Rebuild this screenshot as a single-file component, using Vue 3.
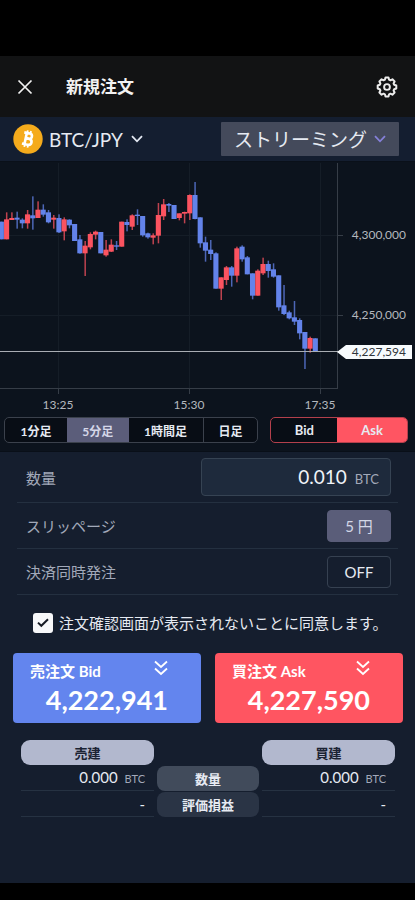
<script setup>
import { ref } from 'vue'

const UP = 'up'
const DOWN = 'down'

// [direction, body top, body bottom, wick high, wick low], three units per pixel
const series = [
  [DOWN, 185, 238, 185, 238], [UP, 178, 238, 157, 238], [UP, 174, 180, 157, 180],
  [DOWN, 173, 179, 155, 206], [DOWN, 179, 190, 175, 205], [UP, 163, 190, 150, 206],
  [DOWN, 166, 175, 109, 209], [UP, 149, 174, 124, 174], [DOWN, 149, 164, 133, 170],
  [DOWN, 157, 187, 150, 190], [UP, 173, 179, 165, 206], [DOWN, 174, 217, 163, 219],
  [UP, 178, 214, 172, 241], [DOWN, 179, 196, 178, 205], [DOWN, 192, 243, 192, 243],
  [DOWN, 238, 280, 225, 281], [UP, 257, 280, 243, 348], [UP, 222, 262, 217, 268],
  [UP, 215, 224, 212, 238], [DOWN, 216, 280, 216, 280], [UP, 269, 286, 240, 290],
  [UP, 254, 275, 238, 276], [DOWN, 256, 260, 243, 270], [UP, 185, 260, 185, 260],
  [DOWN, 186, 195, 178, 214], [UP, 166, 200, 163, 210], [DOWN, 164, 168, 148, 195],
  [DOWN, 168, 226, 168, 230], [DOWN, 220, 232, 218, 236], [UP, 226, 233, 220, 253],
  [UP, 165, 227, 129, 250], [UP, 133, 169, 117, 180], [DOWN, 132, 137, 129, 156],
  [DOWN, 135, 177, 135, 177], [UP, 160, 174, 160, 181], [UP, 156, 161, 155, 190],
  [UP, 105, 160, 103, 180], [DOWN, 105, 177, 66, 178], [DOWN, 172, 250, 172, 263],
  [DOWN, 247, 272, 230, 305], [DOWN, 269, 282, 240, 300], [DOWN, 280, 386, 277, 386],
  [UP, 352, 386, 352, 420], [UP, 322, 360, 318, 375], [DOWN, 322, 347, 318, 380],
  [UP, 265, 347, 260, 367], [DOWN, 260, 298, 256, 305], [DOWN, 292, 343, 288, 343],
  [DOWN, 340, 407, 340, 418], [UP, 332, 407, 328, 407], [UP, 312, 340, 293, 345],
  [DOWN, 312, 333, 302, 353], [DOWN, 328, 350, 310, 353], [DOWN, 346, 442, 346, 452],
  [DOWN, 436, 462, 375, 465], [DOWN, 457, 475, 452, 478], [DOWN, 472, 485, 423, 495],
  [DOWN, 480, 520, 475, 538], [DOWN, 516, 566, 516, 627], [UP, 534, 566, 530, 578],
  [DOWN, 535, 575, 535, 575],
]

const candles = series.map(([dir, top, bottom, high, low], i) => ({
  dir,
  x: 1.3 + i * 5.233,
  top: top / 3,
  height: (bottom - top) / 3,
  high: high / 3,
  low: low / 3,
}))

const times = [
  { label: '13:25', x: 58 },
  { label: '15:30', x: 189 },
  { label: '17:35', x: 320 },
]
const prices = [
  { label: '4,300,000', y: 75 },
  { label: '4,250,000', y: 155 },
]

const frames = ['1分足', '5分足', '1時間足', '日足']
const frame = ref('5分足')
const side = ref('Ask')
const mode = ref('ストリーミング')
const quantity = ref('0.010')
const agreed = ref(true)
</script>

<template>
  <div class="page">
    <header class="header">
      <button class="icon-button" type="button" aria-label="閉じる">
        <svg width="16" height="16" viewBox="0 0 16 16"><path d="M1.5 1.5 14.5 14.5M14.5 1.5 1.5 14.5" fill="none" stroke="#f2f2f2" stroke-width="1.7" /></svg>
      </button>
      <h1 class="title">新規注文</h1>
      <button class="icon-button" type="button" aria-label="設定">
        <svg width="22" height="22" viewBox="0 0 22 22" fill="none" stroke="#ececec">
          <path stroke-width="2" stroke-linejoin="round" d="M9.5 1.6h3l.6 2.1 1.3.6 2-1 2.2 2.2-1 2 .6 1.3 2.1.7v3l-2.1.7-.6 1.3 1 2-2.2 2.2-2-1-1.3.6-.6 2.1h-3l-.6-2.1-1.3-.6-2 1-2.2-2.2 1-2-.6-1.3-2.1-.7v-3l2.1-.7.6-1.3-1-2 2.2-2.2 2 1 1.3-.6z" />
          <circle cx="11" cy="11" r="2.9" stroke-width="1.9" />
        </svg>
      </button>
    </header>

    <div class="pair-bar">
      <button class="pair" type="button">
        <svg width="30" height="30" viewBox="0 0 30 30">
          <circle cx="15" cy="15" r="14.7" fill="#f5ab1c" />
          <g transform="rotate(12 15 15)" fill="none" stroke="#fff">
            <path stroke-width="2.6" d="M12.6 9.2V20.8M10 9.3h5.6c3.6 0 3.6 5.2 0 5.2h-3M15.6 14.6c4.7 0 4.7 6.1 0 6.1H10" />
            <path stroke-width="1.8" d="M13 6.6v3M16.3 6.6v3M13 20.5v3M16.3 20.5v3" />
          </g>
        </svg>
        <span>BTC/JPY</span>
        <svg class="pair-arrow" width="12" height="8" viewBox="0 0 12 8"><path d="M1 1.2 6 6.3 11 1.2" fill="none" stroke="#e3e8f2" stroke-width="1.8" /></svg>
      </button>
      <div class="mode">
        <select v-model="mode" aria-label="注文方法">
          <option>ストリーミング</option>
        </select>
        <svg class="mode-arrow" width="12" height="8" viewBox="0 0 12 8"><path d="M1 1.2 6 6.3 11 1.2" fill="none" stroke="#8580d8" stroke-width="1.8" /></svg>
      </div>
    </div>

    <section class="chart-area">
      <svg class="chart" viewBox="0 2 415 250">
        <g class="grid">
          <path v-for="t in times" :key="t.x" :d="`M${t.x + .5} 3V228`" />
          <path v-for="p in prices" :key="p.y" :d="`M0 ${p.y + .5}H337`" />
        </g>
        <g class="axis">
          <path d="M337.5 3V228.5M0 228.5H338" />
          <path v-for="t in times" :key="t.x" :d="`M${t.x + .5} 228V234`" />
          <path v-for="p in prices" :key="p.y" :d="`M337 ${p.y + .5}H343`" />
        </g>
        <g v-for="c in candles" :key="c.x" :class="c.dir">
          <rect class="wick" :x="c.x - .6" :y="c.high" width="1.5" :height="c.low - c.high" />
          <rect :x="c.x - 2.5" :y="c.top" width="5.1" :height="c.height" />
        </g>
        <path d="M0 191.5H340" stroke="#a9adb3" />
        <path d="M337 192 346 185H412V199H346z" fill="#f7fbfd" />
        <g class="labels">
          <text v-for="t in times" :key="t.x" :x="t.x" y="249" text-anchor="middle">{{ t.label }}</text>
          <text v-for="p in prices" :key="p.y" x="406" :y="p.y + 4" text-anchor="end">{{ p.label }}</text>
          <text class="now" x="406" y="196" text-anchor="end">4,227,594</text>
        </g>
      </svg>
      <div class="switches">
        <div class="frames">
          <button v-for="f in frames" :key="f" type="button" :class="{ active: f === frame }" @click="frame = f">{{ f }}</button>
        </div>
        <div class="sides">
          <button v-for="s in ['Bid', 'Ask']" :key="s" type="button" :class="{ active: s === side }" @click="side = s">{{ s }}</button>
        </div>
      </div>
    </section>

    <main class="panel">
      <div class="rows">
        <div class="row">
          <label for="quantity">数量</label>
          <div class="quantity">
            <input id="quantity" v-model="quantity" type="text" inputmode="decimal" />
            <span>BTC</span>
          </div>
        </div>
        <div class="row">
          <span>スリッページ</span>
          <button class="value filled" type="button">5 円</button>
        </div>
        <div class="row">
          <span>決済同時発注</span>
          <button class="value" type="button">OFF</button>
        </div>
      </div>

      <label class="agree">
        <span class="box">
          <input v-model="agreed" type="checkbox" />
          <svg v-if="agreed" width="12" height="10" viewBox="0 0 12 10"><path d="M1 4.6 4.3 7.8 11 1.2" fill="none" stroke="#151a24" stroke-width="2" /></svg>
        </span>
        <span>注文確認画面が表示されないことに同意します。</span>
      </label>

      <div class="orders">
        <button class="order sell" type="button">
          <span class="order-head">売注文 Bid
            <svg width="14" height="16" viewBox="0 0 14 16"><path d="M1 1.5 7 7 13 1.5M1 8.5 7 14 13 8.5" fill="none" stroke="#fff" stroke-width="1.8" /></svg>
          </span>
          <span class="order-price">4,222,941</span>
        </button>
        <button class="order buy" type="button">
          <span class="order-head">買注文 Ask
            <svg width="14" height="16" viewBox="0 0 14 16"><path d="M1 1.5 7 7 13 1.5M1 8.5 7 14 13 8.5" fill="none" stroke="#fff" stroke-width="1.8" /></svg>
          </span>
          <span class="order-price">4,227,590</span>
        </button>
      </div>

      <table class="positions">
        <thead>
          <tr>
            <th class="head" scope="col">売建</th>
            <td class="middle"></td>
            <th class="head" scope="col">買建</th>
          </tr>
        </thead>
        <tbody>
          <tr>
            <td class="amount">0.000 <small>BTC</small></td>
            <th class="name first" scope="row">数量</th>
            <td class="amount">0.000 <small>BTC</small></td>
          </tr>
          <tr>
            <td class="amount">-</td>
            <th class="name" scope="row">評価損益</th>
            <td class="amount">-</td>
          </tr>
        </tbody>
      </table>
    </main>
  </div>
</template>

<style>
body {
  margin: 0;
  background: #000;
}
</style>

<style scoped>
.page {
  box-sizing: border-box;
  display: flex;
  flex-direction: column;
  min-height: 100vh;
  padding: 56px 0 17px;
  background: #000;
  color: #e6eaf2;
  font-family: Lato, "Noto Sans CJK JP", sans-serif;
}

button,
input,
select {
  box-sizing: border-box;
  margin: 0;
  padding: 0;
  border: 0;
  background: none;
  color: inherit;
  font: inherit;
}

button {
  cursor: pointer;
}

svg {
  display: block;
}

.header {
  display: flex;
  align-items: center;
  height: 61px;
  padding: 0 17px;
  background: #121314;
}

.title {
  flex: 1;
  margin: 0 0 0 33px;
  color: #f2f2f2;
  font-size: 17px;
  font-weight: 700;
  line-height: 24px;
}

.pair-bar {
  display: flex;
  align-items: center;
  justify-content: space-between;
  height: 44px;
  padding: 0 16px 0 13px;
  background: #141e30;
}

.pair {
  display: flex;
  align-items: center;
  gap: 6px;
  font-size: 19px;
}

.pair-arrow {
  margin-left: 2px;
}

.mode {
  position: relative;
}

.mode select {
  width: 178px;
  height: 34px;
  padding: 0 32px 0 13px;
  border-radius: 1px;
  background: #444a5b;
  font-size: 19px;
  appearance: none;
}

.mode-arrow {
  position: absolute;
  top: 13px;
  right: 13px;
  pointer-events: none;
}

.chart-area {
  padding-bottom: 8px;
  border-top: 1px solid #0a1019;
  border-bottom: 1px solid #090f18;
  background: #0c131d;
}

.chart {
  width: 100%;
  height: auto;
}

.grid {
  stroke: #151d27;
}

.axis {
  fill: none;
  stroke: #363d47;
}

.up {
  fill: #fb5360;
}

.down {
  fill: #6383ea;
}

.wick {
  opacity: 0.75;
}

.labels {
  fill: #b4b8be;
  font-size: 12px;
}

.now {
  fill: #30353b;
}

.switches {
  display: flex;
  gap: 12px;
  padding: 5px 7px 0 4px;
}

.frames,
.sides {
  box-sizing: border-box;
  display: flex;
  height: 26px;
  overflow: hidden;
  border: 1px solid #3b414c;
  border-radius: 5px;
  background: #080d15;
  font-size: 13px;
  font-weight: 700;
}

.frames {
  flex: 255;
  font-size: 12px;
}

.frames button {
  flex: 62 1 0;
}

.frames button:nth-child(3) {
  flex-grow: 74;
}

.frames button:nth-child(4) {
  flex-grow: 54;
  border-left: 1px solid #3b414c;
}

.frames .active {
  background: #5b5d7a;
  color: #d5d7e8;
}

.sides {
  flex: 137;
  border-color: #b4404c;
}

.sides button {
  flex: 66 1 0;
}

.sides button:last-child {
  flex-grow: 70;
}

.sides .active {
  background: #ff5562;
}

.panel {
  flex: 1;
  background: #151e2e;
}

.rows {
  padding: 0 17px;
}

.row {
  box-sizing: border-box;
  display: flex;
  align-items: center;
  justify-content: space-between;
  height: 46px;
  padding: 0 7px 0 9px;
  border-bottom: 1px solid #243040;
  color: #a2a9b9;
  font-size: 15px;
}

.row:first-child {
  height: 51px;
}

.quantity {
  box-sizing: border-box;
  display: flex;
  align-items: baseline;
  gap: 8px;
  width: 52%;
  height: 38px;
  padding: 0 11px;
  border: 1px solid #364353;
  border-radius: 4px;
  background: #1e2a3c;
  font-size: 13px;
  line-height: 36px;
}

.quantity input {
  flex: 1;
  min-width: 0;
  height: 36px;
  color: #f0f3f8;
  font-size: 19px;
  text-align: right;
}

.value {
  width: 64px;
  height: 32px;
  border: 1px solid #364151;
  border-radius: 4px;
  color: #e6eaf2;
  font-size: 15px;
}

.filled {
  border-color: #5a5d79;
  background: #5a5d79;
  color: #d3d7e6;
}

.agree {
  display: flex;
  align-items: center;
  gap: 6px;
  padding: 17px 0 19px 33px;
  font-size: 15px;
  line-height: 22px;
  white-space: nowrap;
}

.box {
  display: grid;
  place-items: center;
}

.box > * {
  grid-area: 1 / 1;
}

.box input {
  width: 20px;
  height: 20px;
  border-radius: 3px;
  background: #f7f8fa;
  appearance: none;
}

.box svg {
  z-index: 1;
  pointer-events: none;
}

.orders {
  display: grid;
  grid-template-columns: 1fr 1fr;
  gap: 14px;
  padding: 0 12px 0 13px;
}

.order {
  display: flex;
  flex-direction: column;
  height: 70px;
  padding: 7px 33px 0 17px;
  border-radius: 4px;
  color: #fff;
  font-weight: 700;
}

.sell {
  background: #6385ee;
}

.buy {
  background: #ff5561;
}

.order-head {
  display: flex;
  justify-content: space-between;
  align-self: stretch;
  font-size: 15px;
  line-height: 22px;
}

.order-price {
  align-self: flex-end;
  font-size: 27px;
  line-height: 36px;
}

.positions {
  width: 100%;
  margin-top: 16px;
  padding: 0 17px 0 18px;
  border-spacing: 3px 1px;
  table-layout: fixed;
  color: #e6eaf2;
}

.positions th,
.positions td {
  box-sizing: border-box;
  height: 25px;
  padding: 0;
  font-size: 13px;
  line-height: 20px;
}

.positions .middle {
  width: 102px;
}

.positions .head {
  height: 24px;
  border-radius: 9px;
  background: #b2b8ce;
  color: #1b2333;
}

.positions .name {
  border-radius: 8px;
  background: #2a3445;
}

.positions .first {
  background: #414b5b;
}

.positions .amount {
  padding-right: 9px;
  border-bottom: 1px solid #263242;
  font-size: 15px;
  text-align: right;
}

.positions small {
  margin-left: 3px;
  color: #a2a9b9;
  font-size: 11px;
}
</style>
